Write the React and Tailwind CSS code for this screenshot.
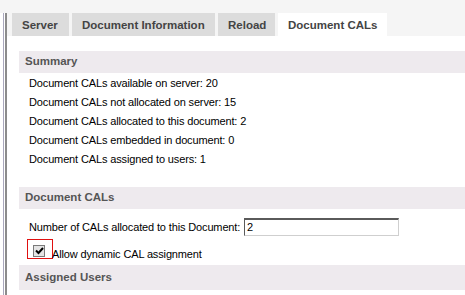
import React from 'react';

const tabs = [
  { label: 'Server', width: 'w-[57px]' },
  { label: 'Document Information', width: 'w-[143px]' },
  { label: 'Reload', width: 'w-[57px]' },
  { label: 'Document CALs', width: 'w-[109px]', active: true },
];

const summary = [
  'Document CALs available on server: 20',
  'Document CALs not allocated on server: 15',
  'Document CALs allocated to this document: 2',
  'Document CALs embedded in document: 0',
  'Document CALs assigned to users: 1',
];

function SectionHeader({ children, className = '' }) {
  return (
    <div className={`bg-[#eeeaee] pl-[6px] flex items-center text-[11.5px] font-bold text-[#555] tracking-normal ${className}`}>
      {children}
    </div>
  );
}

export default function App() {
  return (
    <div className="w-[465px] h-[295px] overflow-hidden bg-white flex flex-col font-['Liberation_Sans',Arial,sans-serif] text-black">
      <div className="h-[13px] shrink-0 bg-[#f5f5f5]" />
      <div className="flex flex-1 min-h-0">
        {/* left frame lines */}
        <div className="w-[3px] shrink-0" />
        <div className="w-px shrink-0 bg-[#aaa8bd]" />
        <div className="w-px shrink-0" />
        <div className="w-[2px] shrink-0 bg-[#8c8c8c]" />

        <div className="flex-1 flex flex-col min-w-0">
          {/* tab strip */}
          <div className="h-[23px] shrink-0 bg-[#f5f5f5] flex pl-[5px] gap-[3px]">
            {tabs.map(tab => (
              <div
                key={tab.label}
                className={`${tab.width} h-full pl-[10px] pt-[4px] text-[11.5px] font-bold text-[#444] whitespace-nowrap ${tab.active ? 'bg-white' : 'bg-[#dcdcdc]'}`}
              >
                {tab.label}
              </div>
            ))}
          </div>

          <div className="pl-[12px] pt-[15px] flex flex-col text-[11px] tracking-[-0.14px]">
            <SectionHeader className="h-[22px]">Summary</SectionHeader>
            <div className="pl-[10px] pt-[1px] pb-[18px]">
              {summary.map(line => (
                <div key={line} className="h-[19px] leading-[19px] whitespace-nowrap">{line}</div>
              ))}
            </div>

            <SectionHeader className="h-[22px]">Document CALs</SectionHeader>
            <div className="pl-[10px] pt-[9px] flex items-center">
              <span className="w-[215px] shrink-0 whitespace-nowrap">Number of CALs allocated to this Document:</span>
              <div className="w-[155px] h-[18px] border-t-2 border-l border-t-[#5a5a5a] border-l-[#5a5a5a] border-r border-b border-r-[#cfcfcf] border-b-[#cfcfcf] bg-white pl-[2px] leading-[15px]">
                2
              </div>
            </div>
            <div className="pl-[8px] pt-[3px] flex items-end">
              <div className="w-[26px] h-[20px] border border-[#e01010] flex items-start pl-[5px] pt-[5px] shrink-0">
                <div className="w-[12px] h-[12px] border border-[#7a7a7a] bg-[#e4e4e4] flex items-center justify-center">
                  <svg width="9" height="8" viewBox="0 0 9 8">
                    <path d="M1 3.5 L3.5 6 L8 1" stroke="#000" strokeWidth="2" fill="none" />
                  </svg>
                </div>
              </div>
              <span className="-ml-px mb-[-2px] leading-[14px] whitespace-nowrap">Allow dynamic CAL assignment</span>
            </div>

            <SectionHeader className="h-[25px] mt-[6px]">Assigned Users</SectionHeader>
          </div>
        </div>
      </div>
    </div>
  );
}
